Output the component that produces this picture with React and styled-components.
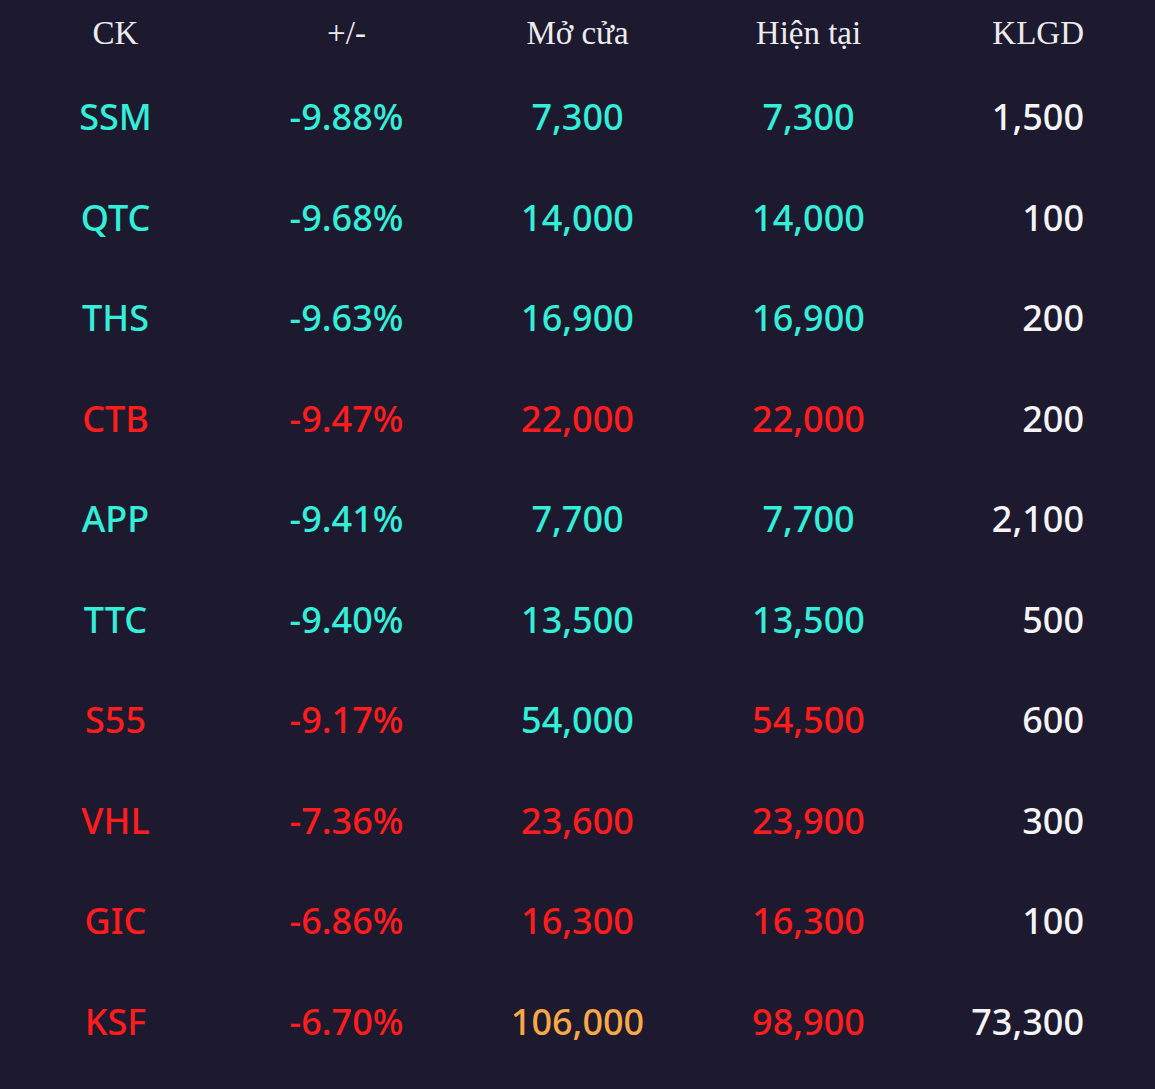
import React from 'react';
import styled, { createGlobalStyle } from 'styled-components'

const colors = {
  bg: '#1d1a2f',
  up: '#33efd9',
  down: '#ff1c1c',
  ref: '#f7a948',
  plain: '#f4f4f6',
}

const GlobalStyle = createGlobalStyle`
  html, body {
    margin: 0;
    padding: 0;
    background-color: ${colors.bg};
  }
`

const Board = styled.div`
  width: 1155px;
  height: 1089px;
  background-color: ${colors.bg};
  overflow: hidden;
`
const Row = styled.div`
  display: grid;
  grid-template-columns: repeat(4, 231px) 1fr;
  align-items: center;
  height: ${props => props.head ? '67px' : '100.5px'};
  padding-right: 71px;
`
const HeadCell = styled.div`
  font-family: "Liberation Serif", "Times New Roman", serif;
  font-size: 33px;
  color: #ececef;
  text-align: ${props => props.right ? 'right' : 'center'};
  line-height: 1;
`
const Cell = styled.div`
  font-family: "Noto Sans", "Open Sans", sans-serif;
  font-size: 36px;
  font-weight: 500;
  color: ${props => colors[props.tone] || colors.plain};
  text-align: ${props => props.right ? 'right' : 'center'};
  line-height: 1;
`

const rows = [
  ['SSM', 'up', '-9.88%', 'up', '7,300', 'up', '7,300', 'up', '1,500'],
  ['QTC', 'up', '-9.68%', 'up', '14,000', 'up', '14,000', 'up', '100'],
  ['THS', 'up', '-9.63%', 'up', '16,900', 'up', '16,900', 'up', '200'],
  ['CTB', 'down', '-9.47%', 'down', '22,000', 'down', '22,000', 'down', '200'],
  ['APP', 'up', '-9.41%', 'up', '7,700', 'up', '7,700', 'up', '2,100'],
  ['TTC', 'up', '-9.40%', 'up', '13,500', 'up', '13,500', 'up', '500'],
  ['S55', 'down', '-9.17%', 'down', '54,000', 'up', '54,500', 'down', '600'],
  ['VHL', 'down', '-7.36%', 'down', '23,600', 'down', '23,900', 'down', '300'],
  ['GIC', 'down', '-6.86%', 'down', '16,300', 'down', '16,300', 'down', '100'],
  ['KSF', 'down', '-6.70%', 'down', '106,000', 'ref', '98,900', 'down', '73,300'],
]

function App() {
  return (
    <Board>
      <GlobalStyle />
      <Row head>
        <HeadCell>CK</HeadCell>
        <HeadCell>+/-</HeadCell>
        <HeadCell>Mở cửa</HeadCell>
        <HeadCell>Hiện tại</HeadCell>
        <HeadCell right>KLGD</HeadCell>
      </Row>
      {rows.map(([code, tone, change, changeTone, open, openTone, now, nowTone, vol]) => (
        <Row key={code}>
          <Cell tone={tone}>{code}</Cell>
          <Cell tone={changeTone}>{change}</Cell>
          <Cell tone={openTone}>{open}</Cell>
          <Cell tone={nowTone}>{now}</Cell>
          <Cell right>{vol}</Cell>
        </Row>
      ))}
    </Board>
  )
}

export default App;
